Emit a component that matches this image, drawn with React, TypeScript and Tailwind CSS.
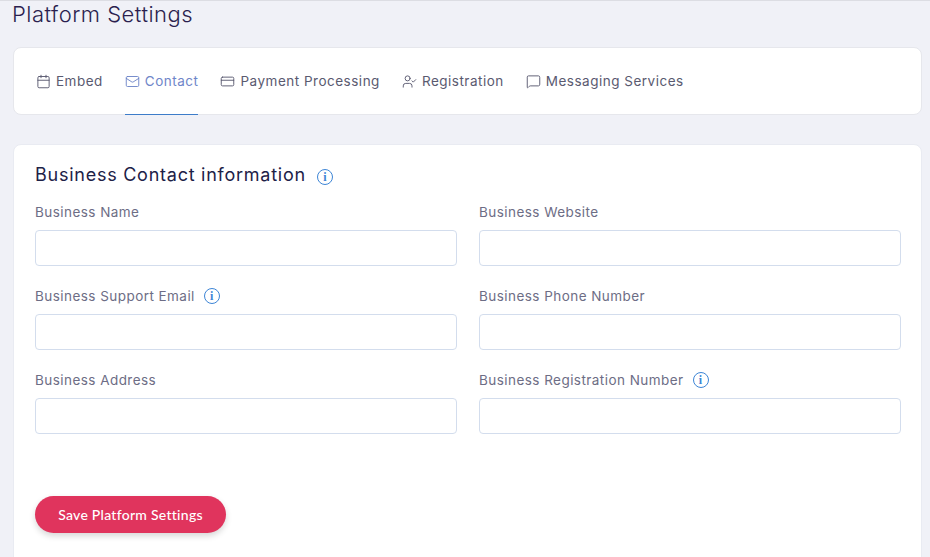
import React from 'react';
import { Calendar, Mail, CreditCard, UserCheck, MessageSquare } from 'lucide-react';

const tabs = [
  { label: 'Embed', icon: Calendar },
  { label: 'Contact', icon: Mail, active: true },
  { label: 'Payment Processing', icon: CreditCard },
  { label: 'Registration', icon: UserCheck },
  { label: 'Messaging Services', icon: MessageSquare },
];

const InfoIcon = () => (
  <span className="inline-flex w-4 h-4 items-center justify-center rounded-full border border-[#3d85d6] text-[#3d85d6] text-[12px] font-bold leading-none font-['Liberation_Serif',serif]">
    i
  </span>
);

const Field = ({ label, info }: { label: string; info?: boolean }) => (
  <div className="flex flex-col">
    <div className="h-[18px] flex items-center gap-[9px] text-[13.5px] text-[#6d6d85] tracking-[0.45px]">
      <span>{label}</span>
      {info && <InfoIcon />}
    </div>
    <div className="mt-[9px] h-9 rounded border border-[#d3dded] bg-white" />
  </div>
);

export default function App() {
  return (
    <div className="h-[557px] w-[930px] overflow-hidden bg-[#f0f1f7] border-t border-[#dcdde3] font-['Inter',sans-serif]">
      <h1 className="pl-3 h-[46px] text-[22px] leading-[26px] font-light text-[#2b1f4f] tracking-[0.5px]">
        Platform Settings
      </h1>
      <div className="ml-[13px] mr-2 h-[68px] bg-white rounded-lg border border-[#e6e7ec] pl-[22px] flex gap-[22px]">
        {tabs.map((t) => (
          <div
            key={t.label}
            className={`flex items-center gap-[5px] h-[67px] text-[13.5px] tracking-[0.5px] border-b ${
              t.active ? 'border-[#3d7cc9] text-[#6f86c9]' : 'border-transparent text-[#5a5a70]'
            }`}
          >
            <t.icon size={15} strokeWidth={1.5} />
            <span className="pt-px">{t.label}</span>
          </div>
        ))}
      </div>
      <div className="mt-[29px] ml-[13px] mr-2 h-[430px] bg-white rounded-lg border border-[#e9ebf2] pl-[21px] pr-[20px]">
        <div className="flex items-center gap-[11px] pt-[9px] h-[50px]">
          <h2 className="text-[18px] leading-6 text-[#1d2147] tracking-[0.75px]">Business Contact information</h2>
          <span className="mt-1 flex">
            <InfoIcon />
          </span>
        </div>
        <div className="grid grid-cols-2 gap-x-[22px] gap-y-[21px] mt-2">
          <Field label="Business Name" />
          <Field label="Business Website" />
          <Field label="Business Support Email" info />
          <Field label="Business Phone Number" />
          <Field label="Business Address" />
          <Field label="Business Registration Number" info />
        </div>
        <button className="mt-[62px] h-[37px] w-[191px] rounded-full bg-[#e0345d] text-white text-[14px] tracking-[0.27px] font-medium shadow-[0_3px_6px_rgba(0,0,0,0.16)] font-['Lato',sans-serif]">
          Save Platform Settings
        </button>
      </div>
    </div>
  );
}
